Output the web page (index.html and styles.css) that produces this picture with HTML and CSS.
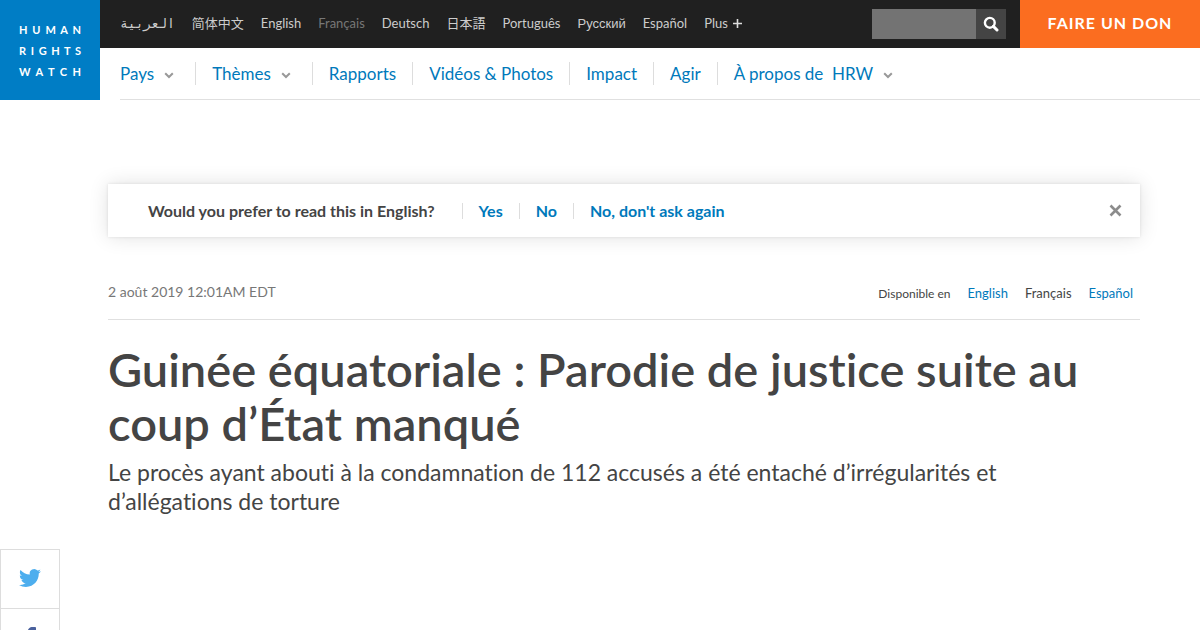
FILE: index.html
```
<!DOCTYPE html>
<html lang="fr">
<head>
  <meta charset="UTF-8">
  <meta name="viewport" content="width=device-width, initial-scale=1.0">
  <title>Guinée équatoriale : Parodie de justice suite au coup d’État manqué</title>
  <link rel="stylesheet" href="styles.css">
</head>
<body>
  <header class="header">
    <a class="logo" href="#">
      <span>H U M A N</span>
      <span>R I G H T S</span>
      <span>W A T C H</span>
    </a>
    <div class="header-main">
      <div class="topbar">
        <ul class="languages">
          <li><a class="arabic" href="#" lang="ar">العربية</a></li>
          <li><a href="#" lang="zh-Hans">简体中文</a></li>
          <li><a href="#">English</a></li>
          <li><a class="current" href="#">Français</a></li>
          <li><a href="#">Deutsch</a></li>
          <li><a class="japanese" href="#" lang="ja">日本語</a></li>
          <li><a href="#">Português</a></li>
          <li><a class="russian" href="#" lang="ru">Русский</a></li>
          <li><a href="#">Español</a></li>
          <li>
            <a class="more" href="#">Plus
              <svg width="9" height="9" viewBox="0 0 9 9"><path d="M4.5 0v9M0 4.5h9" stroke="#ddd" stroke-width="1.6"/></svg>
            </a>
          </li>
        </ul>
        <form class="search">
          <input type="text" aria-label="Rechercher">
          <button type="button" aria-label="Lancer la recherche">
            <svg width="16" height="16" viewBox="0 0 16 16" fill="none" stroke="#fff"><circle cx="6.8" cy="6.8" r="4.9" stroke-width="2.4"/><path d="M10.4 10.4l3.6 3.6" stroke-width="3" stroke-linecap="round"/></svg>
          </button>
        </form>
        <a class="donate" href="#">FAIRE UN DON</a>
      </div>
      <nav class="nav">
        <ul>
          <li><a href="#">Pays</a><svg class="arrow" viewBox="0 0 10 7"><path d="M1.2 1.2L5 5l3.8-3.8"/></svg></li>
          <li><a href="#">Thèmes</a><svg class="arrow" viewBox="0 0 10 7"><path d="M1.2 1.2L5 5l3.8-3.8"/></svg></li>
          <li><a href="#">Rapports</a></li>
          <li><a href="#">Vidéos &amp; Photos</a></li>
          <li><a href="#">Impact</a></li>
          <li><a href="#">Agir</a></li>
          <li><a href="#">À propos de&nbsp; HRW</a><svg class="arrow" viewBox="0 0 10 7"><path d="M1.2 1.2L5 5l3.8-3.8"/></svg></li>
        </ul>
      </nav>
    </div>
  </header>

  <main class="content">
    <div class="notice">
      <p>Would you prefer to read this in English?</p>
      <ul>
        <li><a href="#">Yes</a></li>
        <li><a href="#">No</a></li>
        <li><a href="#">No, don't ask again</a></li>
      </ul>
      <button class="close" type="button" aria-label="Close">
        <svg width="13" height="13" viewBox="0 0 13 13"><path d="M1.5 1.5l10 10M11.5 1.5l-10 10" stroke="#8c8c8c" stroke-width="2.6"/></svg>
      </button>
    </div>

    <article>
      <div class="meta">
        <time datetime="2019-08-02T00:01">2 août 2019 12:01AM EDT</time>
        <div class="available">
          <span class="label">Disponible en</span>
          <a href="#">English</a>
          <span>Français</span>
          <a href="#">Español</a>
        </div>
      </div>
      <h1>Guinée équatoriale : Parodie de justice suite au coup d’État manqué</h1>
      <h2>Le procès ayant abouti à la condamnation de 112 accusés a été entaché d’irrégularités et d’allégations de torture</h2>
    </article>
  </main>

  <div class="share">
    <a href="#" aria-label="Twitter">
      <svg width="22" height="22" viewBox="0 0 24 24" fill="#4daeee"><path d="M23.95 4.57a10 10 0 0 1-2.82.77 4.96 4.96 0 0 0 2.16-2.72c-.95.55-2 .95-3.13 1.18a4.92 4.92 0 0 0-8.38 4.48C7.69 8.1 4.07 6.13 1.64 3.16a4.82 4.82 0 0 0-.67 2.48c0 1.7.87 3.2 2.19 4.1a4.9 4.9 0 0 1-2.23-.62v.06a4.92 4.92 0 0 0 3.95 4.83 5 5 0 0 1-2.21.08 4.94 4.94 0 0 0 4.6 3.42A9.87 9.87 0 0 1 0 19.54a13.99 13.99 0 0 0 7.55 2.21c9.05 0 14-7.5 14-13.98 0-.21 0-.42-.02-.63a9.94 9.94 0 0 0 2.46-2.55z"/></svg>
    </a>
    <a href="#" aria-label="Facebook">
      <svg width="22" height="22" viewBox="0 0 22 22" fill="#4a619d"><path d="M8.500 22V12.500H5V8.500h3.500V5.600C8.500 2 10.600 0 13.800 0c1.500 0 2.800.1 3.200.2V4h-2.200c-1.700 0-2.100.8-2.100 2v2.500h4.100l-.5 4h-3.600V22z"/></svg>
    </a>
  </div>
</body>
</html>
```
FILE: styles.css
```
* {
  box-sizing: border-box;
}
body {
  margin: 0;
  background: #fff;
  color: #444;
  font-family: Lato, "Noto Sans CJK SC", sans-serif;
  font-variant-ligatures: none;
}
ul {
  list-style: none;
  margin: 0;
  padding: 0;
}
a {
  color: #0079bb;
  text-decoration: none;
}

/* header */
.header {
  display: flex;
}
.logo {
  flex: none;
  width: 100px;
  height: 100px;
  padding: 19px 19px 0;
  background: #007dc5;
  color: #fff;
  font-size: 11px;
  font-weight: bold;
  line-height: 21px;
}
.logo span {
  display: block;
  text-align-last: justify;
}
.header-main {
  flex: 1;
}
.topbar {
  display: flex;
  align-items: center;
  height: 48px;
  padding-left: 20px;
  background: #202020;
}
.languages {
  display: flex;
  gap: 17px;
  padding-bottom: 2px;
  font-size: 13px;
  line-height: 20px;
}
.languages a {
  color: #ccc;
}
.languages .current {
  color: #777;
}
.languages svg {
  margin-left: 2px;
}
.arabic {
  font-family: "DejaVu Sans Mono", monospace;
}
.japanese {
  font-family: "Noto Sans CJK JP", sans-serif;
}
.russian {
  font-family: "Liberation Sans", sans-serif;
}
.search {
  display: flex;
  margin-left: auto;
}
.search input {
  width: 104px;
  height: 30px;
  padding: 0 8px;
  border: 0;
  background: #737373;
  color: #fff;
}
.search button {
  display: flex;
  align-items: center;
  justify-content: center;
  width: 30px;
  height: 30px;
  padding: 0;
  border: 0;
  background: #444;
}
.donate {
  width: 180px;
  height: 48px;
  margin-left: 14px;
  background: #fb6d20;
  color: #fff;
  font-size: 16px;
  font-weight: bold;
  letter-spacing: 1px;
  line-height: 46px;
  text-align: center;
}

.nav {
  margin-left: 20px;
  padding: 14px 0;
  border-bottom: 1px solid #e0e0e0;
}
.nav ul {
  display: flex;
}
.nav li {
  display: flex;
  align-items: center;
  padding: 0 16px;
  border-left: 1px solid #ddd;
  font-size: 17px;
  line-height: 23px;
}
.nav li:first-child {
  padding-left: 0;
  border-left: 0;
}
.arrow {
  width: 10px;
  height: 7px;
  margin: 3px 5px 0 10px;
  fill: none;
  stroke: #999;
  stroke-width: 2;
}

/* content */
.content {
  padding: 84px 60px 0 108px;
}
.notice {
  display: flex;
  align-items: center;
  height: 53px;
  padding: 0 18px 0 40px;
  background: #fff;
  box-shadow: 0 0 20px rgba(0, 0, 0, .12), 0 0 3px rgba(0, 0, 0, .1);
  font-size: 16px;
  font-weight: bold;
  line-height: 16px;
}
.notice p {
  margin: 0 27px 0 0;
}
.notice ul {
  display: flex;
}
.notice li {
  padding: 0 16px;
  border-left: 1px solid #ddd;
}
.close {
  display: flex;
  margin-left: auto;
  padding: 0;
  border: 0;
  background: none;
}
.meta {
  display: flex;
  align-items: center;
  justify-content: space-between;
  height: 56px;
  margin-top: 27px;
  border-bottom: 1px solid #e0e0e0;
}
.meta time {
  color: #777;
  font-size: 14px;
}
.available {
  display: flex;
  align-items: baseline;
  gap: 17px;
  padding: 3px 7px 0 0;
  font-size: 13px;
}
.available .label {
  font-size: 12px;
}
h1 {
  margin: 22px 0 0;
  font-size: 47px;
  font-weight: 600;
  line-height: 54px;
}
h2 {
  margin: 8px 0 0;
  padding-right: 40px;
  font-size: 23px;
  font-weight: normal;
  line-height: 29px;
}

/* share buttons stay on the left edge while scrolling */
.share {
  position: fixed;
  top: 549px;
  left: 0;
  width: 60px;
  border: 1px solid #ddd;
  background: #fff;
}
.share a {
  display: flex;
  align-items: center;
  justify-content: center;
  height: 58px;
  padding-bottom: 2px;
}
.share a + a {
  height: 60px;
  border-top: 1px solid #ddd;
}
```
